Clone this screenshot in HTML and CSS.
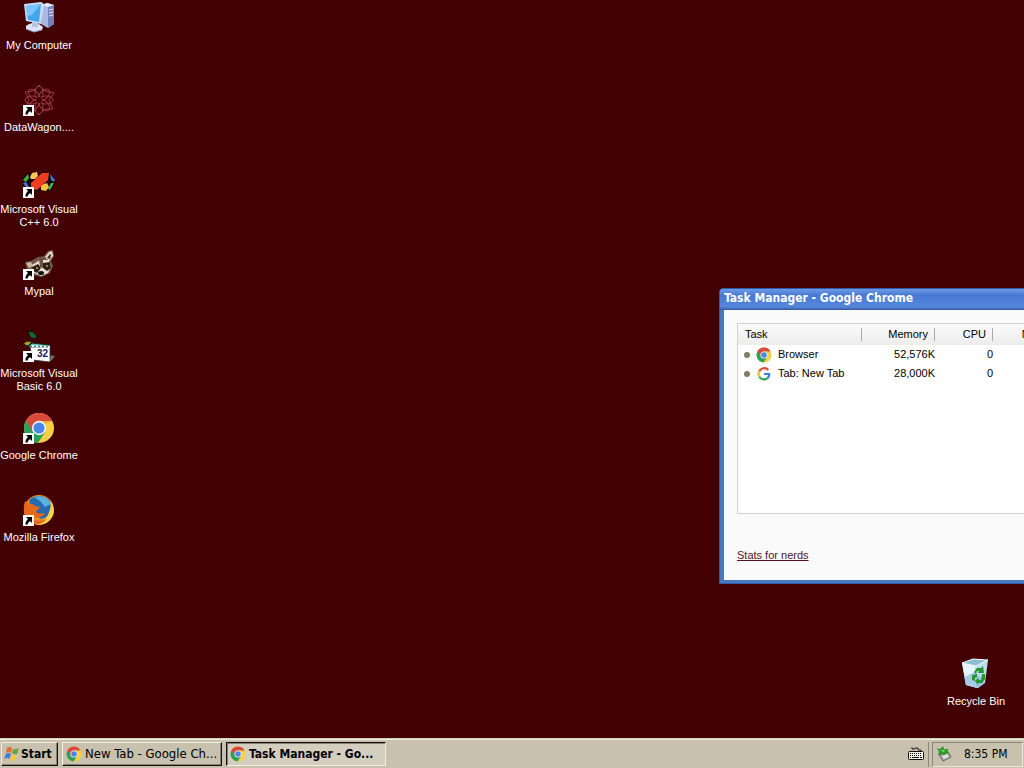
FILE: index.html
```html
<!DOCTYPE html>
<html lang="en">
<head>
<meta charset="utf-8">
<title>Desktop</title>
<link rel="stylesheet" href="styles.css">
</head>
<body>
<svg class="defs" aria-hidden="true">
  <symbol id="chrome" viewBox="0 0 32 32">
    <circle cx="16" cy="16" r="15" fill="#f8cf43"/>
    <path d="M16 16 3 8.500A15 15 0 0 0 15 31L22.500 19.500Z" fill="#2f9e58"/>
    <path d="M3 8.500A15 15 0 0 1 29.200 9H16L9.500 19Z" fill="#d9493c"/>
    <path d="M16 9H29.200L22 12Z" fill="#e8b23a"/>
    <circle cx="16" cy="16" r="7.200" fill="#f4f4f4"/>
    <circle cx="16" cy="16" r="5.600" fill="#4a86e8"/>
  </symbol>
  <symbol id="shortcut" viewBox="0 0 11 11">
    <path d="M0 0H11V11H0Z" fill="#fff"/>
    <path d="M3 2H9V8L7.200 6.200C5.500 7 5 7.800 4.600 9.500H2.500C2.200 7.500 3.500 5.500 5 4Z" fill="#000"/>
  </symbol>
</svg>

<main class="desktop">
  <nav class="icons" aria-label="Desktop icons">
    <button class="icon">
      <svg class="glyph" viewBox="0 0 32 32">
        <path d="M19 3 24 1 31 3V22L25 26 18 22Z" fill="#aab6e4"/>
        <path d="M25 5 31 3V22L25 26Z" fill="#7580be"/>
        <path d="M19 3 24 1 31 3 25 5Z" fill="#e3e9fb"/>
        <path d="M26 8 30 7M26 11 30 10M26 14 30 13" stroke="#e5eaff"/>
        <path d="M6 22 13 20 20 25 19 28 11 30 3 27V24Z" fill="#dfe4f4"/>
        <path d="M3 27 11 30 19 28" stroke="#8b94bd" fill="none"/>
        <path d="M9 19H15V25H9Z" fill="#b8c2e3"/>
        <path d="M1 2 18 0 21 2 18 22 3 19Z" fill="#c9dcf3"/>
        <path d="M3 4 18 2 16 20 5 18Z" fill="#43a6ed"/>
        <path d="M3 4 18 2 9 13 4 14Z" fill="#78c3fb"/>
      </svg>
      <span>My Computer</span>
    </button>
    <button class="icon">
      <svg class="glyph" viewBox="0 0 32 32">
        <g fill="none" stroke="#9c3b44" stroke-width="1">
          <g id="petals"><ellipse cx="16" cy="9" rx="4" ry="7"/><ellipse cx="16" cy="23" rx="4" ry="7"/><ellipse cx="9" cy="16" rx="7" ry="4"/><ellipse cx="23" cy="16" rx="7" ry="4"/></g>
          <use href="#petals" transform="rotate(45 16 16)"/>
          <path d="M16 1 22 7 31 9 26 16 30 25 22 25 16 31 10 25 2 24 6 16 2 8 10 7Z"/>
        </g>
        <circle cx="16" cy="16" r="3" fill="#430003"/>
        <use href="#shortcut" x="0" y="21" width="11" height="11"/>
      </svg>
      <span>DataWagon....</span>
    </button>
    <button class="icon">
      <svg class="glyph" viewBox="0 0 32 32">
        <path d="M4 7H27L32 14V18L27 25H5L0 18V13Z" fill="#170203"/>
        <path d="M0 14 5 8 6 12 3 16Z" fill="#36b344"/>
        <path d="M0 17 3 16 6 21H3Z" fill="#3f78e0"/>
        <path d="M7 11 9 7 14 6 15 10 12 13 8 13Z" fill="#f9c45a"/>
        <path d="M27 8 32 14 31 16 28 14Z" fill="#3f78e0"/>
        <path d="M31 17 27 24 25 23 28 17Z" fill="#42bd4a"/>
        <path d="M18 19 24 17 26 21 23 25 18 24Z" fill="#f9c443"/>
        <path d="M8 17 19 7 26 7 25 14 14 24 8 23Z" fill="#ef3d20"/>
        <use href="#shortcut" x="0" y="21" width="11" height="11"/>
      </svg>
      <span>Microsoft Visual C++ 6.0</span>
    </button>
    <button class="icon">
      <svg class="glyph" viewBox="0 0 32 32">
        <path d="M2 14 8 13 15 9 21 8 25 3 30 2 31 8 28 13 30 18 27 25 19 29 10 27 4 21Z" fill="#6e5847"/>
        <path d="M22 9 26 4 29 3 30 8 26 13Z" fill="#e7d9c4"/>
        <path d="M24 10 27 6 28 7 27 11Z" fill="#392820"/>
        <path d="M3 15 8 14 10 18 6 20Z" fill="#cbb8a0"/>
        <path d="M9 17 17 12 26 12 28 18 25 25 18 28 11 25Z" fill="#eadfce"/>
        <path d="M9 19 15 16 18 20 14 25 10 23ZM20 15 27 14 28 20 24 23 20 20Z" fill="#2d211c"/>
        <path d="M16 11 20 9 20 20 17 19Z" fill="#6a5140"/>
        <ellipse cx="18" cy="25" rx="3" ry="2" fill="#171110"/>
        <circle cx="14" cy="20" r="1" fill="#d89742"/><circle cx="24" cy="18" r="1" fill="#d89742"/>
        <use href="#shortcut" x="0" y="21" width="11" height="11"/>
      </svg>
      <span>Mypal</span>
    </button>
    <button class="icon">
      <svg class="glyph" viewBox="0 0 32 32">
        <path d="M5 1 10 2 14 6 12 9 7 7Z" fill="#1d6137" stroke="#071c0e"/>
        <path d="M0 14 4 11 9 12 5 16Z" fill="#a9a338" stroke="#292300"/>
        <path d="M25 25 32 26 28 31H22Z" fill="#77716d"/>
        <path d="M5 17 9 13 27 15 27 19Z" fill="#64c5b5" stroke="#152522"/>
        <path d="M7 17 27 17 27 32 10 30Z" fill="#fff" stroke="#31313e" stroke-width=".8"/>
        <path d="M9 16 27 17" stroke="#e5fffb" stroke-width="2" stroke-dasharray="2 2"/>
        <text class="badge-text" x="14" y="27">32</text>
        <use href="#shortcut" x="0" y="21" width="11" height="11"/>
      </svg>
      <span>Microsoft Visual Basic 6.0</span>
    </button>
    <button class="icon">
      <svg class="glyph" viewBox="0 0 32 32">
        <use href="#chrome" width="32" height="32"/>
        <use href="#shortcut" x="0" y="21" width="11" height="11"/>
      </svg>
      <span>Google Chrome</span>
    </button>
    <button class="icon">
      <svg class="glyph" viewBox="0 0 32 32">
        <circle cx="16" cy="16" r="15" fill="#ef8b21"/>
        <path d="M6 6A14 14 0 0 1 29 11L27 22 18 25 8 17Z" fill="#276bb1"/>
        <path d="M11 3C17 1 25 3 28 10L22 13 17 7Z" fill="#57b3df"/>
        <path d="M27 6C31 11 32 18 29 23 25 30 17 33 9 29 18 29 25 24 26 18 28 14 28 10 27 6Z" fill="#f9d247"/>
        <path d="M2 7 6 10C9 9 11 11 12 12L17 13C16 16 13 16 13 18 15 21 20 18 22 20 18 24 12 25 8 22 11 28 19 28 24 24 21 30 12 33 6 27 0 22 0 14 2 7Z" fill="#e56a1c"/>
        <use href="#shortcut" x="0" y="21" width="11" height="11"/>
      </svg>
      <span>Mozilla Firefox</span>
    </button>
  </nav>

  <button class="icon recycle">
    <svg class="glyph" viewBox="0 0 32 32">
      <path d="M2 5 15 7 28 2 25 25 18 30 6 27Z" fill="#b9dcee"/>
      <path d="M2 5 15 8 17 30 6 27Z" fill="#e3f4fb"/>
      <path d="M4 19 15 14 25 25 18 30 6 27Z" fill="#85b6df" opacity=".65"/>
      <path d="M2 5 13 1 28 2 16 8Z" fill="#8ebdd0"/>
      <path d="M2 5 13 1 28 2 16 8Z" fill="none" stroke="#f3fcff" stroke-linejoin="round"/>
      <g fill="#249632">
        <path d="M14 14 17 10 21 10 23 8 24 15 18 15 19 13 17 13 16 16Z"/>
        <path d="M22 16 25 16 25 21 22 25 18 25 18 27 15 23 18 20 19 22 21 22Z"/>
        <path d="M12 17 17 16 17 19 15 20 15 23 12 22Z"/>
      </g>
    </svg>
    <span>Recycle Bin</span>
  </button>

  <section class="window" aria-labelledby="window-title">
    <h1 class="titlebar" id="window-title">Task Manager - Google Chrome</h1>
    <div class="content">
      <div class="list">
        <table class="tasks">
          <colgroup><col class="col-task"><col class="col-memory"><col class="col-cpu"><col class="col-network"></colgroup>
          <thead>
            <tr><th><span>Task</span></th><th><span>Memory</span></th><th><span>CPU</span></th><th><span>Network</span></th></tr>
          </thead>
          <tbody>
            <tr>
              <td><div class="task"><i class="dot"></i><svg class="small" viewBox="0 0 32 32"><use href="#chrome"/></svg>Browser</div></td>
              <td>52,576K</td><td>0</td><td></td>
            </tr>
            <tr>
              <td><div class="task"><i class="dot"></i><svg class="small" viewBox="0 0 16 16" fill="none" stroke-width="2.200">
                <path d="M12.300 4.100A5.400 5.400 0 0 0 3.300 5.300" stroke="#df4937"/>
                <path d="M3.300 5.300A5.400 5.400 0 0 0 3.300 10.700" stroke="#f2bd2c"/>
                <path d="M3.300 10.700A5.400 5.400 0 0 0 11.500 12.100" stroke="#31a654"/>
                <path d="M11.500 12.100A5.400 5.400 0 0 0 13.300 8H8" stroke="#427ee0"/>
              </svg>Tab: New Tab</div></td>
              <td>28,000K</td><td>0</td><td></td>
            </tr>
          </tbody>
        </table>
      </div>
      <a class="stats" href="#stats">Stats for nerds</a>
    </div>
  </section>
</main>

<footer class="taskbar">
  <button class="bar-button start">
    <svg class="small" viewBox="0 0 16 16">
      <path d="M3 2Q6 0 8 2L7 7Q5 5 2 7Z" fill="#ea6634"/>
      <path d="M9 3Q12 4 15 2L13 8Q11 9 8 7Z" fill="#67a53b"/>
      <path d="M2 8Q5 6 7 8L5 13Q3 11 0 13Z" fill="#4779d6"/>
      <path d="M8 8Q11 10 13 9L11 14Q8 16 6 14Z" fill="#f3c63c"/>
    </svg>
    <span>Start</span>
  </button>
  <button class="bar-button app"><svg class="small" viewBox="0 0 32 32"><use href="#chrome"/></svg><span>New Tab - Google Ch...</span></button>
  <button class="bar-button app active" aria-pressed="true"><svg class="small" viewBox="0 0 32 32"><use href="#chrome"/></svg><span>Task Manager - Go...</span></button>
  <button class="keyboard" aria-label="Keyboard">
    <svg class="small" viewBox="0 0 16 16">
      <path d="M4 1V3H7V2H10V4H13V5" fill="none" stroke="#222"/>
      <rect x=".5" y="5.500" width="15" height="8" rx="1" fill="#f5f3e8" stroke="#111"/>
      <path d="M2 7.500H14M2 9.500H14" stroke="#111" stroke-dasharray="1 1"/>
      <path d="M2 11.500H3M4 11.500H11M12 11.500H14" stroke="#111"/>
    </svg>
  </button>
  <div class="tray">
    <svg class="small" viewBox="0 0 16 16">
      <path d="M3 9 12 6 15 11 7 15Z" fill="#a9aaa4" stroke="#62645e"/>
      <path d="M6 10 11 8 13 11 8 13Z" fill="#dedfd8"/>
      <path d="M1 2 4 3 7 0 8 3 12 3 12 7 8 9 5 8 2 9 3 6Z" fill="#2c9b2e"/>
      <path d="M4 4 9 4 8 6Z" fill="#7de06c"/>
    </svg>
    <time datetime="20:35">8:35 PM</time>
  </div>
</footer>
</body>
</html>
```
FILE: styles.css
```css
* { box-sizing: border-box; }

body {
  display: flex;
  flex-direction: column;
  height: 100vh;
  margin: 0;
  overflow: hidden;
  background: #430003;
  font: 11px/13px "Liberation Sans", Arial, sans-serif;
  color: #000;
}

button { padding: 0; border: 0; font: inherit; color: inherit; background: none; }
svg { display: block; flex: none; }
.defs { position: absolute; width: 0; height: 0; }

.desktop { position: relative; flex: 1; overflow: hidden; }

.icons {
  display: grid;
  grid-auto-rows: 82px;
  width: 78px;
  padding-top: 2px;
}

.icon {
  display: flex;
  flex-direction: column;
  align-items: center;
  gap: 5px;
  width: 78px;
  color: #fff;
}

.glyph { width: 32px; height: 32px; }
.small { width: 16px; height: 16px; }
.badge-text { font: bold 10px "Liberation Sans", Arial, sans-serif; fill: #151a60; }

.recycle { position: absolute; right: 9px; bottom: 30px; }

.window {
  position: absolute;
  top: 288px;
  left: 719px;
  width: 480px;
  padding: 0 4px 3px;
  border: 1px solid #315ba4;
  border-radius: 4px 4px 0 0;
  background: #4878c0;
}

.titlebar {
  height: 21px;
  margin: 0 -4px;
  padding: 0 4px;
  border-radius: 3px 3px 0 0;
  background: linear-gradient(#6d9be8, #4779d2 30%, #5487dc 85%, #34599c);
  color: #fff;
  font: bold 12px/18px "DejaVu Sans Condensed", "DejaVu Sans", sans-serif;
}

.content {
  padding: 13px 13px 18px 12px;
  border-left: 1px solid #f6f9ff;
  background: #fafafa;
}

.list {
  height: 191px;
  border: 1px solid #d2d2d2;
  background: #fff;
}

.tasks { width: 331px; border-collapse: collapse; table-layout: fixed; }
.col-task { width: 124px; }
.col-memory { width: 73px; }
.col-cpu { width: 58px; }
.col-network { width: 76px; }

.tasks th { height: 21px; padding: 0; background: linear-gradient(#fafafa, #ededed); font-weight: normal; text-align: right; }
.tasks th span { display: block; padding: 0 6px 0 7px; border-right: 1px solid #aaa; }
.tasks th:first-child, .tasks td:first-child { text-align: left; }
.tasks td { height: 19px; padding: 0; text-align: right; }
.task { display: flex; align-items: center; padding-left: 6px; }
.task .small { margin: 0 6px; }
.dot { width: 6px; height: 6px; border-radius: 50%; background: #7d8062; }

.stats { display: inline-block; margin-top: 35px; color: #50151b; }

.taskbar {
  display: flex;
  align-items: center;
  height: 30px;
  padding: 2px 1px 1px;
  border-top: 1px solid #d5cfbd;
  background: #c7c1ae;
  box-shadow: inset 0 1px #eeeade;
  font: 13px/16px "DejaVu Sans Condensed", "DejaVu Sans", sans-serif;
}

.bar-button {
  display: flex;
  align-items: center;
  gap: 3px;
  height: 24px;
  padding: 0 3px;
  border: 1px solid;
  border-color: #f2eee2 #111 #111 #f2eee2;
  box-shadow: inset -1px -1px #858071;
  white-space: nowrap;
}

.start { width: 57px; gap: 1px; padding: 0 2px; font-size: 12px; font-weight: bold; }
.app { width: 160px; margin-left: 4px; }

.active {
  border-color: #111 #f2eee2 #f2eee2 #111;
  box-shadow: inset 1px 1px #858071;
  background: repeating-conic-gradient(#d9d4c6 0 25%, #cec8b8 0 50%) 0 0 / 2px 2px;
  font-size: 12px;
  font-weight: bold;
}

.keyboard { margin-left: auto; margin-right: 8px; }

.tray {
  display: flex;
  align-items: center;
  gap: 12px;
  width: 91px;
  height: 25px;
  padding: 0 3px;
  border: 1px solid;
  border-color: #8c8777 #ece8dc #ece8dc #8c8777;
  box-shadow: -3px 0 #c7c1ae, -4px 0 #8c8777;
  font-size: 12px;
}
```
